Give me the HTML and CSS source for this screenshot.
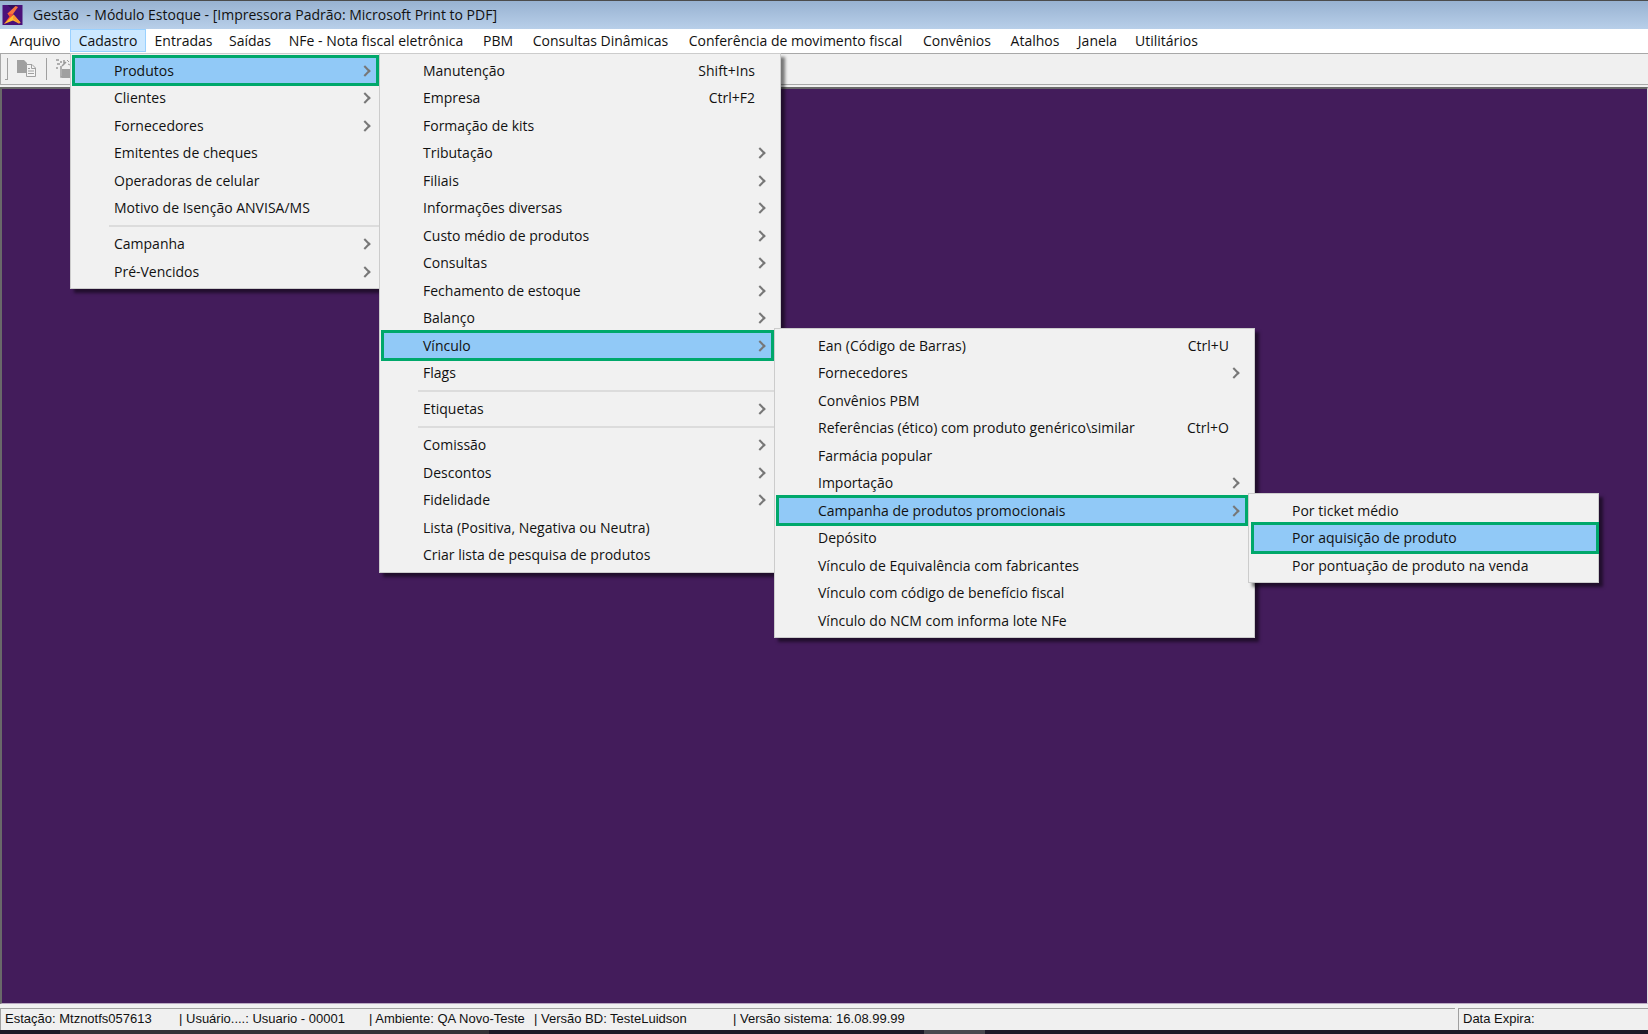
FILE: index.html
```html
<!DOCTYPE html>
<html lang="pt-BR">
<head>
<meta charset="utf-8">
<title>Gestão - Módulo Estoque</title>
<link rel="stylesheet" href="styles.css">
</head>
<body>
<div class="window">
  <header class="titlebar">
    <svg class="app-icon" viewBox="0 0 20 20" aria-hidden="true">
      <rect width="20" height="20" fill="#4b1179"/>
      <path d="M5 0L10 5L15 0Z" fill="#32105c"/>
      <path d="M13 1L15.500 2L10.500 9L7 11L5 8.500Z" fill="#f8753e"/>
      <path d="M5 8.500L10.500 9L8 14.500L1.500 19L7 11.500Z" fill="#f44b35"/>
      <path d="M8 12.500L11 9.500L18 17.500L16.500 18.500L10.500 15.500L1.500 19Z" fill="#ffbf2e"/>
      <path d="M11 9.500L18 17.500L16.500 18.500L10.500 14Z" fill="#fb9532"/>
    </svg>
    <h1 class="title">Gestão&nbsp; - Módulo Estoque - [Impressora Padrão: Microsoft Print to PDF]</h1>
  </header>

  <nav aria-label="Menu principal">
    <ul class="menubar">
      <li><button type="button">Arquivo</button></li>
      <li class="open"><button type="button" aria-expanded="true">Cadastro</button>
        <ul class="menu menu-cadastro">
          <li class="selected"><button type="button" class="more">Produtos</button>
            <ul class="menu menu-produtos">
              <li><button type="button">Manutenção <kbd>Shift+Ins</kbd></button></li>
              <li><button type="button">Empresa <kbd>Ctrl+F2</kbd></button></li>
              <li><button type="button">Formação de kits</button></li>
              <li><button type="button" class="more">Tributação</button></li>
              <li><button type="button" class="more">Filiais</button></li>
              <li><button type="button" class="more">Informações diversas</button></li>
              <li><button type="button" class="more">Custo médio de produtos</button></li>
              <li><button type="button" class="more">Consultas</button></li>
              <li><button type="button" class="more">Fechamento de estoque</button></li>
              <li><button type="button" class="more">Balanço</button></li>
              <li class="selected"><button type="button" class="more">Vínculo</button>
                <ul class="menu menu-vinculo">
                  <li><button type="button">Ean (Código de Barras) <kbd>Ctrl+U</kbd></button></li>
                  <li><button type="button" class="more">Fornecedores</button></li>
                  <li><button type="button">Convênios PBM</button></li>
                  <li><button type="button">Referências (ético) com produto genérico\similar <kbd>Ctrl+O</kbd></button></li>
                  <li><button type="button">Farmácia popular</button></li>
                  <li><button type="button" class="more">Importação</button></li>
                  <li class="selected"><button type="button" class="more">Campanha de produtos promocionais</button>
                    <ul class="menu menu-campanha">
                      <li><button type="button">Por ticket médio</button></li>
                      <li class="selected leaf"><button type="button">Por aquisição de produto</button></li>
                      <li><button type="button">Por pontuação de produto na venda</button></li>
                    </ul>
                  </li>
                  <li><button type="button">Depósito</button></li>
                  <li><button type="button">Vínculo de Equivalência com fabricantes</button></li>
                  <li><button type="button">Vínculo com código de benefício fiscal</button></li>
                  <li><button type="button">Vínculo do NCM com informa lote NFe</button></li>
                </ul>
              </li>
              <li><button type="button">Flags</button></li>
              <li class="separator" role="separator"></li>
              <li><button type="button" class="more">Etiquetas</button></li>
              <li class="separator" role="separator"></li>
              <li><button type="button" class="more">Comissão</button></li>
              <li><button type="button" class="more">Descontos</button></li>
              <li><button type="button" class="more">Fidelidade</button></li>
              <li><button type="button">Lista (Positiva, Negativa ou Neutra)</button></li>
              <li><button type="button">Criar lista de pesquisa de produtos</button></li>
            </ul>
          </li>
          <li><button type="button" class="more">Clientes</button></li>
          <li><button type="button" class="more">Fornecedores</button></li>
          <li><button type="button">Emitentes de cheques</button></li>
          <li><button type="button">Operadoras de celular</button></li>
          <li><button type="button">Motivo de Isenção ANVISA/MS</button></li>
          <li class="separator" role="separator"></li>
          <li><button type="button" class="more">Campanha</button></li>
          <li><button type="button" class="more">Pré-Vencidos</button></li>
        </ul>
      </li>
      <li><button type="button">Entradas</button></li>
      <li><button type="button">Saídas</button></li>
      <li><button type="button">NFe - Nota fiscal eletrônica</button></li>
      <li><button type="button">PBM</button></li>
      <li><button type="button">Consultas Dinâmicas</button></li>
      <li><button type="button">Conferência de movimento fiscal</button></li>
      <li><button type="button">Convênios</button></li>
      <li><button type="button">Atalhos</button></li>
      <li><button type="button">Janela</button></li>
      <li><button type="button">Utilitários</button></li>
    </ul>
  </nav>

  <div class="toolbar" role="toolbar" aria-label="Ferramentas">
    <span class="grip"></span>
    <button type="button" aria-label="Copiar">
      <svg width="20" height="18" viewBox="0 0 20 18" aria-hidden="true">
        <path d="M0 0H7L10 3V13H0Z" fill="#a0a0a0"/>
        <path d="M9.500 4.500H15L18.500 8V16.500H9.500Z" fill="#f4f4f4" stroke="#a0a0a0"/>
        <path d="M14.500 4.500V8.500H18.500M11 8.500H13M11 11H17M11 13.500H17" fill="none" stroke="#a0a0a0"/>
      </svg>
    </button>
    <span class="divider"></span>
    <button type="button" aria-label="Nova janela">
      <svg width="20" height="20" viewBox="0 0 20 20" aria-hidden="true">
        <path d="M0 1H3M4 3H6M8 1V5M1 5H4M6 7L10 3M1 8V10M5 7V18H10" fill="none" stroke="#999" stroke-width="1.500"/>
        <path d="M6 10H18V19H6Z" fill="#a0a0a0"/>
        <path d="M11 1L13 3M12 5L14 6" stroke="#999"/>
      </svg>
    </button>
  </div>

  <main class="workspace"></main>

  <footer class="statusbar">
    <div class="panel panel-session">
      <span class="station">Estação: Mtznotfs057613</span>
      <span class="user">| Usuário....: Usuario - 00001</span>
      <span class="environment">| Ambiente: QA Novo-Teste</span>
      <span class="database">| Versão BD: TesteLuidson</span>
      <span>| Versão sistema: 16.08.99.99</span>
    </div>
    <div class="panel panel-expiry">Data Expira:</div>
  </footer>
  <div class="taskbar"><span class="task"></span><span class="tray"></span></div>
</div>
</body>
</html>
```
FILE: styles.css
```css
* { box-sizing: border-box; }

body {
  margin: 0;
  font: 14px/20px "Open Sans", "Noto Sans", sans-serif;
  color: #111;
  background: #f0f0f0;
}

ul { list-style: none; margin: 0; padding: 0; }

button {
  margin: 0;
  padding: 0;
  border: 0;
  background: none;
  color: inherit;
  font: inherit;
  white-space: nowrap;
}

.window {
  display: flex;
  flex-direction: column;
  min-height: 100vh;
  overflow: hidden;
}

/* Title bar */
.titlebar {
  display: flex;
  align-items: center;
  gap: 10px;
  height: 29px;
  padding-left: 2px;
  border-top: 1px solid #4c4c4c;
  background: linear-gradient(#98b2d1, #b8cfe9);
}
.app-icon { width: 21px; height: 20px; }
.title { margin: 0; font-size: 14px; font-weight: 400; }

/* Menu bar */
.menubar {
  display: grid;
  grid-template-columns: 70px 76px 75px 58px 194px 50px 155px 235px 88px 68px 57px 81px;
  height: 24px;
  background: #fff;
}
.menubar > li { position: relative; }
.menubar > li > button { width: 100%; height: 23px; }
.menubar > .open > button {
  background: #cce8ff;
  box-shadow: inset 0 0 0 1px #99d1ff;
}

/* Drop-down menus */
.menu {
  position: absolute;
  z-index: 2;
  padding: 3px 2px;
  border: 1px solid #ccc;
  background: #f1f1f1;
  box-shadow: 4px 4px 3px rgba(0, 0, 0, 0.5);
}
.menu-cadastro { top: 100%; left: 0; width: 316px; }
.menu .menu { top: -4px; left: calc(100% - 4px); }
.menu-produtos { width: 402px; }
.menu-vinculo { width: 481px; }
.menu-campanha { width: 351px; }

.menu > li { position: relative; height: 27px; }
.menu > li:nth-child(even) { height: 28px; }
.menu > li > button {
  position: relative;
  display: flex;
  justify-content: space-between;
  align-items: center;
  width: 100%;
  height: 100%;
  padding: 0 23px 0 41px;
  text-align: left;
}
.menu kbd { font: inherit; }
.menu .more::after {
  content: "";
  width: 6px;
  height: 6px;
  margin-right: -9px;
  border: solid #777;
  border-width: 2px 2px 0 0;
  transform: rotate(45deg);
}
.menu > .selected::before {
  content: "";
  position: absolute;
  inset: -2px 4px -2px -1px;
  border: 3px solid #00a86b;
  background: #91c9f7;
}
.menu > .leaf::before { right: -3px; left: 0; }
.menu > .separator,
.menu > .separator:nth-child(even) {
  height: 8px;
  margin-left: 36px;
  background: linear-gradient(#dcdcdc, #dcdcdc) 0 3px / 100% 2px no-repeat;
}

/* Toolbar */
.toolbar {
  display: flex;
  align-items: center;
  gap: 9px;
  height: 32px;
  padding-left: 4px;
  border-top: 1px solid #a8a8a8;
  border-bottom: 1px solid #a8a8a8;
  border-left: 1px solid #a8a8a8;
}
.toolbar button { display: flex; }
.grip {
  width: 3px;
  height: 22px;
  border-right: 1px solid #a0a0a0;
  border-bottom: 1px solid #a0a0a0;
}
.divider { width: 1px; height: 22px; background: #a0a0a0; }

/* Work area */
.workspace {
  flex: 1;
  margin-top: 2px;
  border: solid #696969;
  border-width: 2px 1px 1px 2px;
  border-right-color: #ddd;
  border-bottom-color: #b9a9c2;
  background: #431c5b;
}

/* Status bar */
.statusbar {
  display: flex;
  gap: 3px;
  padding-top: 4px;
  font: 13px/20px "Liberation Sans", Arial, sans-serif;
}
.panel {
  display: flex;
  height: 22px;
  border-top: 1px solid #a0a0a0;
  border-left: 1px solid #a0a0a0;
  padding-left: 4px;
}
.panel-session { flex: 1; }
.panel-expiry { width: 190px; }
.station { width: 174px; }
.user { width: 190px; }
.environment { width: 165px; }
.database { width: 199px; }

/* Strip of the system taskbar */
.taskbar {
  display: flex;
  justify-content: space-between;
  height: 4px;
  padding: 0 663px 0 60px;
  background: #1e1828;
}
.task { width: 429px; background: #353238; }
.tray { width: 61px; background: #4a474f; }
```
